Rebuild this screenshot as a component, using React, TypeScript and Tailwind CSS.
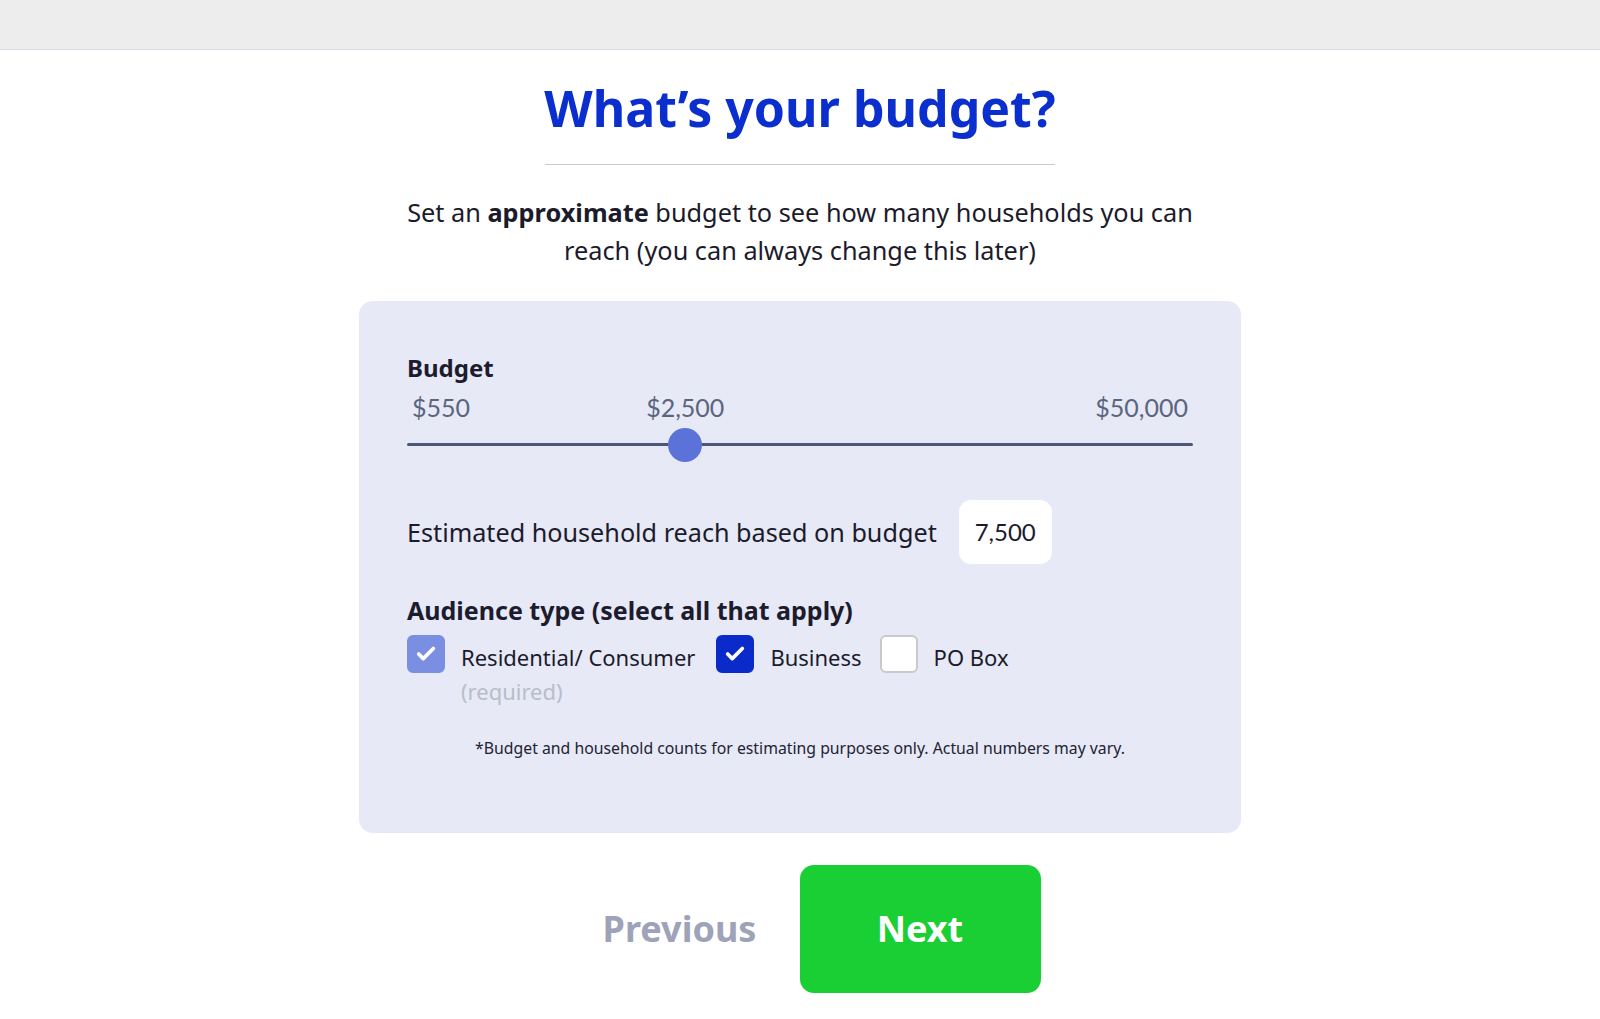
import { useState } from "react";
import { Check } from "lucide-react";

const MIN = 550;
const MAX = 50000;

const fmt = (n: number) => "$" + n.toLocaleString("en-US");

const Checkbox = ({
  checked,
  disabled,
  onClick,
}: {
  checked: boolean;
  disabled?: boolean;
  onClick?: () => void;
}) => {
  const tone = disabled
    ? "bg-[#7b8fe2] border-[#7b8fe2]"
    : checked
      ? "bg-[#0a2bc9] border-[#0a2bc9]"
      : "bg-white border-[#c9c9cc]";
  return (
    <button
      type="button"
      onClick={onClick}
      aria-checked={checked}
      role="checkbox"
      className={`w-[38px] h-[38px] shrink-0 rounded-[6px] border-2 flex items-center justify-center ${tone}`}
    >
      {checked && <Check size={22} strokeWidth={4} className="text-white" />}
    </button>
  );
};

const App = () => {
  const [budget] = useState(2500);
  const [business, setBusiness] = useState(true);
  const [poBox, setPoBox] = useState(false);

  // the thumb sits at roughly 35% of the track in the design
  const pct = 35.4;

  return (
    <div className="min-h-screen bg-white font-['Noto_Sans',sans-serif] text-[#1b1b2b]">
      <div className="h-[50px] bg-[#ededed] border-b border-[#d6dde6]" />

      <div className="flex flex-col items-center">
        <h1 className="mt-[28px] text-[50px] leading-[60px] font-bold text-[#0b2fcf]">
          What’s your budget?
        </h1>
        <div className="mt-[26px] w-[510px] h-px bg-[#cacaca]" />
        <p className="mt-[28px] text-[25.3px] leading-[38px] text-center text-[#1b1b2b]">
          Set an <span className="font-bold">approximate</span> budget to see how many households you can
          <br />
          reach (you can always change this later)
        </p>

        {/* card */}
        <div className="mt-[32px] w-[882px] h-[532px] rounded-[14px] bg-[#e7e9f6] px-[48px] pt-[52px]">
          <div className="text-[24px] leading-[30px] font-bold text-[#1c1c2e]">Budget</div>

          <div className="relative mt-[9px] h-[30px] font-['Lato',sans-serif] text-[25px] leading-[30px] text-[#5a6580]">
            <span className="absolute left-[5px] top-0">{fmt(MIN)}</span>
            <span
              className="absolute top-0 -translate-x-1/2"
              style={{ left: `${pct}%` }}
            >
              {fmt(budget)}
            </span>
            <span className="absolute right-[5px] top-0">{fmt(MAX)}</span>
          </div>

          <div className="relative mt-[6px] h-[34px]">
            <div className="absolute left-0 right-0 top-[15px] h-[3px] rounded-full bg-[#4b5678]" />
            <div
              className="absolute top-0 w-[34px] h-[34px] -translate-x-1/2 rounded-full bg-[#5b73d9]"
              style={{ left: `${pct}%` }}
            />
          </div>

          <div className="mt-[38px] flex items-center gap-[22px]">
            <span className="text-[25.2px] leading-[30px]">Estimated household reach based on budget</span>
            <div className="w-[93px] h-[64px] rounded-[12px] bg-white flex items-center justify-center font-['Lato',sans-serif] text-[24px] text-[#1b1b2b]">
              7,500
            </div>
          </div>

          <div className="mt-[31px] text-[25px] leading-[30px] font-bold text-[#1c1c2e]">
            Audience type (select all that apply)
          </div>

          <div className="mt-[10px] flex items-start">
            <Checkbox checked disabled />
            <div className="ml-[16px] mt-[7px]">
              <div className="text-[22px] leading-[30px]">Residential/ Consumer</div>
              <div className="mt-[4px] text-[22px] leading-[30px] text-[#b9bdc9]">(required)</div>
            </div>
            <div className="ml-[21px]">
              <Checkbox checked={business} onClick={() => setBusiness(!business)} />
            </div>
            <div className="ml-[16px] mt-[7px] text-[22px] leading-[30px]">Business</div>
            <div className="ml-[18px]">
              <Checkbox checked={poBox} onClick={() => setPoBox(!poBox)} />
            </div>
            <div className="ml-[16px] mt-[7px] text-[22px] leading-[30px]">PO Box</div>
          </div>

          <p className="mt-[32px] text-center text-[15.8px] leading-[20px] text-[#222233]">
            *Budget and household counts for estimating purposes only. Actual numbers may vary.
          </p>
        </div>

        {/* nav */}
        <div className="mt-[32px] flex">
          <button type="button" className="w-[240px] h-[128px] text-[36px] font-bold text-[#9ea3b9]">
            Previous
          </button>
          <button
            type="button"
            className="w-[241px] h-[128px] rounded-[14px] bg-[#1acf33] text-[36px] font-bold text-white"
          >
            Next
          </button>
        </div>
      </div>
    </div>
  );
};

export default App;
